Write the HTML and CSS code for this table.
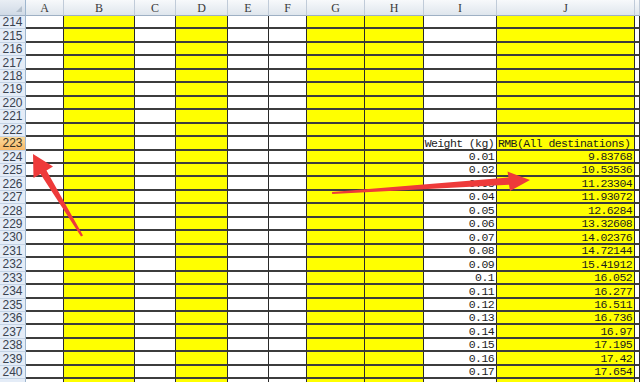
FILE: index.html
```html
<!DOCTYPE html>
<html>
<head>
<meta charset="utf-8">
<link rel="stylesheet" href="styles.css">
</head>
<body>
<div class="sheet">
  <div class="row head">
    <span class="corner"><i class="tri"></i></span><span>A</span><span>B</span><span>C</span><span>D</span><span>E</span><span>F</span><span>G</span><span>H</span><span>I</span><span>J</span><span></span>
  </div>
  <div class="row"><b>214</b><span></span><span class="y"></span><span></span><span class="y"></span><span></span><span></span><span class="y"></span><span class="y"></span><span></span><span class="y"></span><span></span></div>
  <div class="row"><b>215</b><span></span><span class="y"></span><span></span><span class="y"></span><span></span><span></span><span class="y"></span><span class="y"></span><span></span><span class="y"></span><span></span></div>
  <div class="row"><b>216</b><span></span><span class="y"></span><span></span><span class="y"></span><span></span><span></span><span class="y"></span><span class="y"></span><span></span><span class="y"></span><span></span></div>
  <div class="row"><b>217</b><span></span><span class="y"></span><span></span><span class="y"></span><span></span><span></span><span class="y"></span><span class="y"></span><span></span><span class="y"></span><span></span></div>
  <div class="row"><b>218</b><span></span><span class="y"></span><span></span><span class="y"></span><span></span><span></span><span class="y"></span><span class="y"></span><span></span><span class="y"></span><span></span></div>
  <div class="row"><b>219</b><span></span><span class="y"></span><span></span><span class="y"></span><span></span><span></span><span class="y"></span><span class="y"></span><span></span><span class="y"></span><span></span></div>
  <div class="row"><b>220</b><span></span><span class="y"></span><span></span><span class="y"></span><span></span><span></span><span class="y"></span><span class="y"></span><span></span><span class="y"></span><span></span></div>
  <div class="row"><b>221</b><span></span><span class="y"></span><span></span><span class="y"></span><span></span><span></span><span class="y"></span><span class="y"></span><span></span><span class="y"></span><span></span></div>
  <div class="row"><b>222</b><span></span><span class="y"></span><span></span><span class="y"></span><span></span><span></span><span class="y"></span><span class="y"></span><span></span><span class="y"></span><span></span></div>
  <div class="row"><b class="active">223</b><span></span><span class="y"></span><span></span><span class="y"></span><span></span><span></span><span class="y"></span><span class="y"></span><span class="num">Weight (kg)</span><span class="y txt">RMB(All destinations)</span><span></span></div>
  <div class="row"><b>224</b><span></span><span class="y"></span><span></span><span class="y"></span><span></span><span></span><span class="y"></span><span class="y"></span><span class="num">0.01</span><span class="y num">9.83768</span><span></span></div>
  <div class="row"><b>225</b><span></span><span class="y"></span><span></span><span class="y"></span><span></span><span></span><span class="y"></span><span class="y"></span><span class="num">0.02</span><span class="y num">10.53536</span><span></span></div>
  <div class="row"><b>226</b><span></span><span class="y"></span><span></span><span class="y"></span><span></span><span></span><span class="y"></span><span class="y"></span><span class="num">0.03</span><span class="y num">11.23304</span><span></span></div>
  <div class="row"><b>227</b><span></span><span class="y"></span><span></span><span class="y"></span><span></span><span></span><span class="y"></span><span class="y"></span><span class="num">0.04</span><span class="y num">11.93072</span><span></span></div>
  <div class="row"><b>228</b><span></span><span class="y"></span><span></span><span class="y"></span><span></span><span></span><span class="y"></span><span class="y"></span><span class="num">0.05</span><span class="y num">12.6284</span><span></span></div>
  <div class="row"><b>229</b><span></span><span class="y"></span><span></span><span class="y"></span><span></span><span></span><span class="y"></span><span class="y"></span><span class="num">0.06</span><span class="y num">13.32608</span><span></span></div>
  <div class="row"><b>230</b><span></span><span class="y"></span><span></span><span class="y"></span><span></span><span></span><span class="y"></span><span class="y"></span><span class="num">0.07</span><span class="y num">14.02376</span><span></span></div>
  <div class="row"><b>231</b><span></span><span class="y"></span><span></span><span class="y"></span><span></span><span></span><span class="y"></span><span class="y"></span><span class="num">0.08</span><span class="y num">14.72144</span><span></span></div>
  <div class="row"><b>232</b><span></span><span class="y"></span><span></span><span class="y"></span><span></span><span></span><span class="y"></span><span class="y"></span><span class="num">0.09</span><span class="y num">15.41912</span><span></span></div>
  <div class="row"><b>233</b><span></span><span class="y"></span><span></span><span class="y"></span><span></span><span></span><span class="y"></span><span class="y"></span><span class="num">0.1</span><span class="y num">16.052</span><span></span></div>
  <div class="row"><b>234</b><span></span><span class="y"></span><span></span><span class="y"></span><span></span><span></span><span class="y"></span><span class="y"></span><span class="num">0.11</span><span class="y num">16.277</span><span></span></div>
  <div class="row"><b>235</b><span></span><span class="y"></span><span></span><span class="y"></span><span></span><span></span><span class="y"></span><span class="y"></span><span class="num">0.12</span><span class="y num">16.511</span><span></span></div>
  <div class="row"><b>236</b><span></span><span class="y"></span><span></span><span class="y"></span><span></span><span></span><span class="y"></span><span class="y"></span><span class="num">0.13</span><span class="y num">16.736</span><span></span></div>
  <div class="row"><b>237</b><span></span><span class="y"></span><span></span><span class="y"></span><span></span><span></span><span class="y"></span><span class="y"></span><span class="num">0.14</span><span class="y num">16.97</span><span></span></div>
  <div class="row"><b>238</b><span></span><span class="y"></span><span></span><span class="y"></span><span></span><span></span><span class="y"></span><span class="y"></span><span class="num">0.15</span><span class="y num">17.195</span><span></span></div>
  <div class="row"><b>239</b><span></span><span class="y"></span><span></span><span class="y"></span><span></span><span></span><span class="y"></span><span class="y"></span><span class="num">0.16</span><span class="y num">17.42</span><span></span></div>
  <div class="row"><b>240</b><span></span><span class="y"></span><span></span><span class="y"></span><span></span><span></span><span class="y"></span><span class="y"></span><span class="num">0.17</span><span class="y num">17.654</span><span></span></div>
  <div class="row"><b></b><span></span><span class="y"></span><span></span><span class="y"></span><span></span><span></span><span class="y"></span><span class="y"></span><span></span><span class="y"></span><span></span></div>
</div>
<svg class="arrows" width="640" height="382" viewBox="0 0 640 382">
  <polygon class="arrow" points="33,154 53,166.5 46.5,170.5 83,235.5 81,236.5 40.5,174 33.5,178"/>
  <polygon class="arrow" points="530,180 507.5,171.5 508.5,177.5 332,192 332.2,194 509,184.8 510,191"/>
</svg>
</body>
</html>
```
FILE: styles.css
```css
html, body {
  margin: 0;
  padding: 0;
  background: #ffffff;
  overflow: hidden;
}
body {
  position: relative;
  width: 640px;
  height: 382px;
}
.sheet {
  width: 640px;
  height: 382px;
  overflow: hidden;
}
.row {
  display: grid;
  grid-template-columns: 26px 38px 71px 41px 52px 41px 38px 58px 59px 73px 138px 1fr;
  height: 13.46px;
}
.row > span {
  box-sizing: border-box;
  border-right: 1px solid #2a2a2a;
  border-bottom: 2px solid #3c3c3c;
  background: #ffffff;
  font-family: "Liberation Mono", "DejaVu Sans Mono", monospace;
  font-size: 11.5px;
  letter-spacing: -0.6px;
  color: #1c1c1c;
  line-height: 10px;
  white-space: nowrap;
  display: flex;
  align-items: flex-end;
}
.row > span.y {
  background: #ffff00;
}
.row > span.num {
  justify-content: flex-end;
  padding-right: 2px;
}
.row > span.txt {
  justify-content: flex-start;
  padding-left: 1px;
}
.row > b {
  box-sizing: border-box;
  background: #e4ecf7;
  border-right: 1px solid #9eb6ce;
  border-bottom: 1px solid #c3d2e4;
  font-family: "Liberation Sans", Arial, sans-serif;
  font-weight: normal;
  font-size: 12px;
  color: #39424f;
  display: flex;
  align-items: center;
  justify-content: center;
  line-height: 12px;
}
.row > b.active {
  background: linear-gradient(#fcd99a, #f8b968);
  color: #3a3320;
}
.head {
  height: 16px;
}
.head > span {
  box-sizing: border-box;
  background: linear-gradient(#f7f9fb, #dfe6ed);
  border-right: 1px solid #c0cbd8;
  border-bottom: 1px solid #9eb0c4;
  font-family: "Liberation Serif", "DejaVu Serif", serif;
  font-size: 12px;
  letter-spacing: 0;
  color: #3a3a3a;
  justify-content: center;
  align-items: center;
  line-height: 12px;
}
.head > span.corner {
  background: linear-gradient(#e9eef4, #d0dae6);
  border-right: 1px solid #9eb6ce;
  position: relative;
}
.tri {
  position: absolute;
  right: 3px;
  bottom: 3px;
  width: 0;
  height: 0;
  border-left: 6px solid transparent;
  border-bottom: 6px solid #b3bfcc;
}
.arrows {
  position: absolute;
  left: 0;
  top: 0;
  pointer-events: none;
}
.arrow {
  fill: #ee3a3a;
}
```
